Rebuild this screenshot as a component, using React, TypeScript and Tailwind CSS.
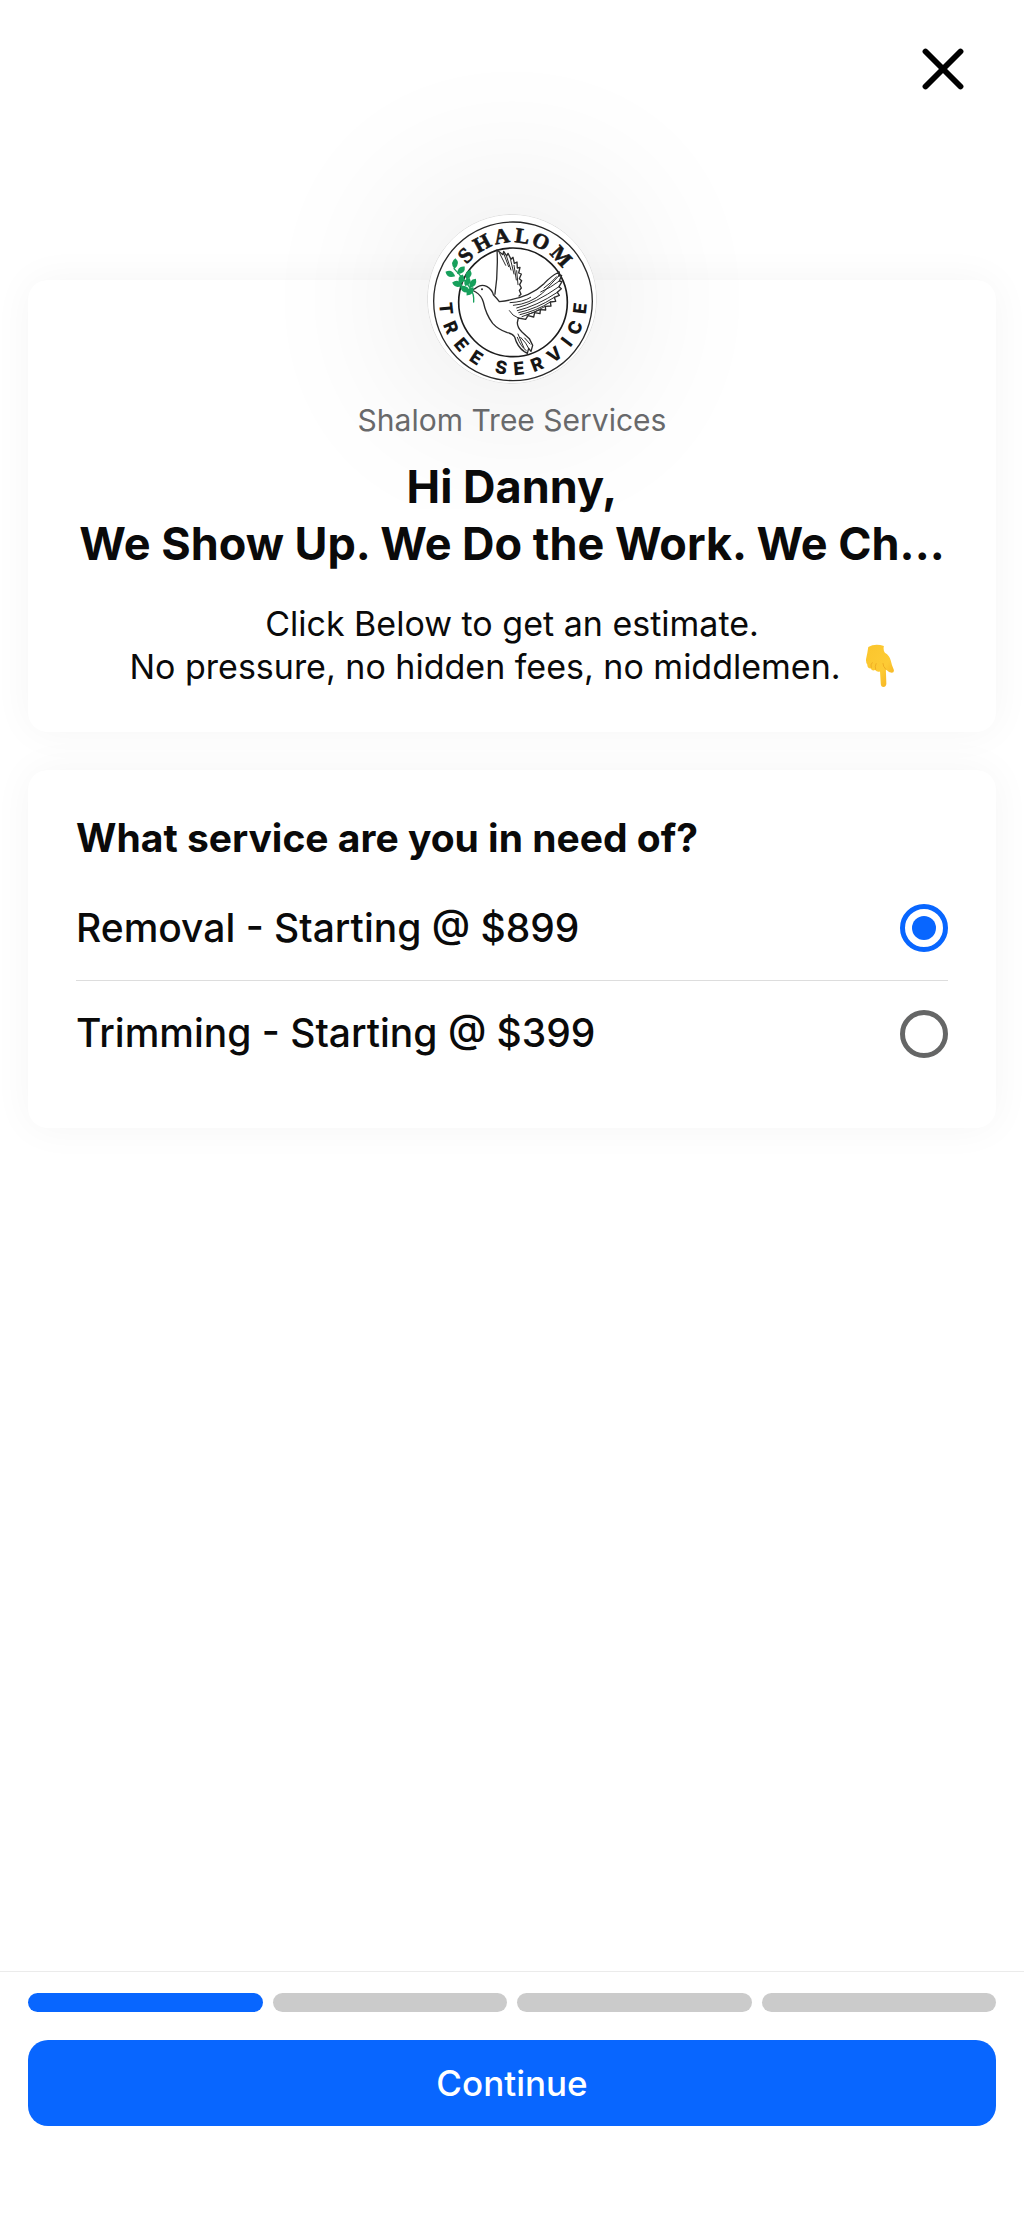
import React, { useState } from 'react';
import { X } from 'lucide-react';

// --- Logo ---
const TOP_LETTERS = [
  { char: 'S', angle: -46 },
  { char: 'H', angle: -28 },
  { char: 'A', angle: -10 },
  { char: 'L', angle: 8 },
  { char: 'O', angle: 25 },
  { char: 'M', angle: 47 },
];

const BOTTOM_LETTERS = [
  { char: 'T', angle: 84 },
  { char: 'R', angle: 67 },
  { char: 'E', angle: 50 },
  { char: 'E', angle: 33 },
  { char: 'S', angle: 10 },
  { char: 'E', angle: -5 },
  { char: 'R', angle: -21 },
  { char: 'V', angle: -38 },
  { char: 'I', angle: -53 },
  { char: 'C', angle: -67 },
  { char: 'E', angle: -84 },
];

// cx, cy, rotation, length of each leaf
const LEAVES = [
  [135, 191, 5, 16],
  [121, 222, -65, 16],
  [153, 211, 45, 16],
  [142, 252, -75, 16],
  [154, 238, 15, 15],
  [175, 224, 20, 16],
  [165, 268, -60, 17],
  [188, 250, 35, 17],
  [172, 246, 30, 14],
  [180, 274, 40, 16],
];

const Logo: React.FC<{ className?: string }> = ({ className = '' }) => {
  return (
    <svg viewBox="51 42 510 510" className={className} role="img" aria-label="Shalom Tree Service">
      <circle cx="306" cy="297" r="254" fill="#fff" stroke="#dcdcdc" strokeWidth="3" />
      <circle cx="309" cy="304" r="238" fill="none" stroke="#2a2a2a" strokeWidth="4" />
      <circle cx="309" cy="307" r="163" fill="none" stroke="#1c1c1c" strokeWidth="5" />

      <g
        fill="#161616"
        stroke="#161616"
        strokeWidth="2"
        fontFamily='"Liberation Serif", serif'
        fontWeight="700"
        fontSize="64"
        textAnchor="middle"
      >
        {TOP_LETTERS.map((l) => (
          <text key={l.char} x="309" y="127" transform={`rotate(${l.angle} 309 304)`}>{l.char}</text>
        ))}
      </g>
      <g fill="#161616" fontFamily="Inter, sans-serif" fontWeight="800" fontSize="54" textAnchor="middle">
        {BOTTOM_LETTERS.map((l, i) => (
          <text key={i} x="309" y="525" transform={`rotate(${l.angle} 309 304)`}>{l.char}</text>
        ))}
      </g>

      {/* dove */}
      <g fill="none" stroke="#2b2b2b" strokeWidth="3" strokeLinecap="round" strokeLinejoin="round">
        <path fill="#fff" strokeWidth="4" d="M254 290 C260 250 264 200 261 150 L279 164 L281 154 L290 168 L294 160 L303 178 L309 172 L313 190 L321 186 L322 204 L330 202 L326 219 L334 222 L328 236 L335 242 L329 254 L334 264 L328 271 L333 283 L324 291" />
        <path d="M268 158 L287 196 M281 160 L296 200 M290 170 L303 210 M302 180 L312 222 M312 196 L319 240 M320 212 L324 254" />
        <path stroke="none" fill="#fff" d="M250 284 L268 305 L330 298 L324 286 L256 284 Z" />
        <path fill="#fff" strokeWidth="4" d="M268 305 C330 298 372 280 402 251 Q424 227 448 216 L446 228 L455 226 L448 243 L456 245 L447 260 L454 266 L442 277 L448 286 L433 292 L437 304 L421 306 L423 318 L406 319 L407 330 L391 329 L390 341 L374 338 L371 351 L354 347 L347 358 L325 354 L322 368 Q322 382 336 396 L358 416 L368 436 L363 454 L356 445 L352 460 L343 455 Q322 441 314 411 Q308 401 292 398 Q264 388 248 370 Q228 344 220 306 Q214 286 197 276 L186 270 Q196 266 202 261 Q214 252 230 259 Q246 268 250 284 Q260 294 268 305" />
        <path d="M298 332 Q307 348 325 354 M300 308 Q340 306 362 292 M310 316 Q360 312 398 279 L446 228 M320 324 Q376 310 447 260 M322 332 Q380 318 442 277 M326 338 Q380 326 433 292 M330 344 Q380 332 421 306 M336 350 Q370 340 406 319 M350 345 L391 329 M402 264 Q424 248 440 230 M392 276 Q424 262 448 243" />
        <path d="M322 412 Q332 440 349 452 M332 412 Q350 430 356 445 M344 414 L360 432 M324 402 L342 444" />
      </g>
      <circle cx="216" cy="268" r="3" fill="#2b2b2b" />

      {/* olive branch */}
      <g fill="#17a05c">
        <path d="M191 306 Q193 284 182 266 Q162 238 132 206" fill="none" stroke="#17a05c" strokeWidth="4" strokeLinecap="round" />
        {LEAVES.map(([cx, cy, rot, len], i) => (
          <path
            key={i}
            d={`M0 ${-len} Q18 -2 0 ${len} Q-18 -2 0 ${-len} Z`}
            transform={`translate(${cx} ${cy}) rotate(${rot})`}
          />
        ))}
      </g>
    </svg>
  );
};

const PointDown: React.FC = () => (
  <svg viewBox="0 0 30 45" className="-my-2 ml-6 inline-block h-11 w-[30px] align-[-1px]" role="img" aria-label="pointing down">
    <defs>
      <linearGradient id="hand" x1="0" y1="0" x2="1" y2="1">
        <stop offset="0" stopColor="#fbc52c" />
        <stop offset="0.6" stopColor="#fdcb35" />
        <stop offset="1" stopColor="#f3ab1c" />
      </linearGradient>
    </defs>
    <path fill="url(#hand)" d="M3 3 Q10 -1 19 2 Q18 6 20 9 Q25 12 26 17 Q27 22 29 26 Q30 29 27 29.500 Q24 29 21 26 L21.500 41 Q21 44 18.500 44 Q16 44 15.800 41 L15 28 Q12 29 10 26.500 Q7 28 5.500 25 Q2 25 2 21 Q0 18 1 14 Q2 10 3 3 Z" />
    <path d="M6 24 Q5 21 7 19 M10.500 26 Q9.500 23 11 20 M21 26 Q18 23 18 20" fill="none" stroke="#eaa51f" strokeWidth="0.800" strokeLinecap="round" />
  </svg>
);

// --- Card ---
const Card: React.FC<{ children: React.ReactNode; className?: string }> = ({ children, className = '' }) => (
  <section className={`mx-7 rounded-[20px] bg-white px-12 shadow-[0_0_40px_rgba(0,0,0,0.045)] ${className}`}>
    {children}
  </section>
);

const SERVICES = [
  { id: 'removal', label: 'Removal - Starting @ $899' },
  { id: 'trimming', label: 'Trimming - Starting @ $399' },
];

const STEPS = 4;

export default function App() {
  const [service, setService] = useState('removal');
  const step = 1;

  return (
    <div className="flex min-h-screen flex-col bg-white font-[Inter,sans-serif] text-[#0a0a0a]">
      <header className="flex justify-end pt-[34px] pr-[46px] pb-44">
        <button type="button" aria-label="Close">
          <X size={70} strokeWidth={2} className="text-black" />
        </button>
      </header>

      <main>
        <Card className="flex flex-col items-center pb-11 text-center">
          <Logo className="-mt-[66px] size-[170px] rounded-full shadow-[0_0_170px_24px_rgba(0,0,0,0.09)]" />
          <p className="mt-4 text-[30px] leading-10 text-[#68696b]">Shalom Tree Services</p>
          <h1 className="mt-[18px] text-[45px] leading-[57px] font-bold whitespace-nowrap">
            Hi Danny,
            <br />
            We Show Up. We Do the Work. We Ch...
          </h1>
          <p className="mt-[30px] text-[34px] leading-[43px] whitespace-nowrap">
            Click Below to get an estimate.
            <br />
            No pressure, no hidden fees, no middlemen.
            <PointDown />
          </p>
        </Card>

        <Card className="mt-[38px] pt-11 pb-[42px]">
          <fieldset>
            <legend className="text-[39px] leading-12 font-bold">What service are you in need of?</legend>
            <div className="mt-3.5 divide-y divide-[#dddddd]">
              {SERVICES.map((s) => (
                <label key={s.id} htmlFor={s.id} className="flex h-[105px] items-center justify-between text-[39px] font-medium">
                  {s.label}
                  <input
                    id={s.id}
                    type="radio"
                    name="service"
                    checked={service === s.id}
                    onChange={() => setService(s.id)}
                    className="grid size-12 appearance-none place-items-center rounded-full border-[5px] border-[#656666] before:size-6 before:rounded-full checked:border-[#0866ff] checked:before:bg-[#0866ff]"
                  />
                </label>
              ))}
            </div>
          </fieldset>
        </Card>
      </main>

      <footer className="mt-auto border-t border-[#ebebeb] px-7 pt-[21px] pb-[93px]">
        <div className="flex gap-2.5" role="progressbar" aria-label="Progress" aria-valuemin={0} aria-valuemax={STEPS} aria-valuenow={step}>
          {Array.from({ length: STEPS }, (_, i) => (
            <div key={i} className={`h-[19px] flex-1 rounded-full ${i < step ? 'bg-[#0866ff]' : 'bg-[#cbcbcb]'}`} />
          ))}
        </div>
        <button type="button" className="mt-7 h-[86px] w-full rounded-[20px] bg-[#0866ff] text-[35px] font-medium text-white">
          Continue
        </button>
      </footer>
    </div>
  );
}
